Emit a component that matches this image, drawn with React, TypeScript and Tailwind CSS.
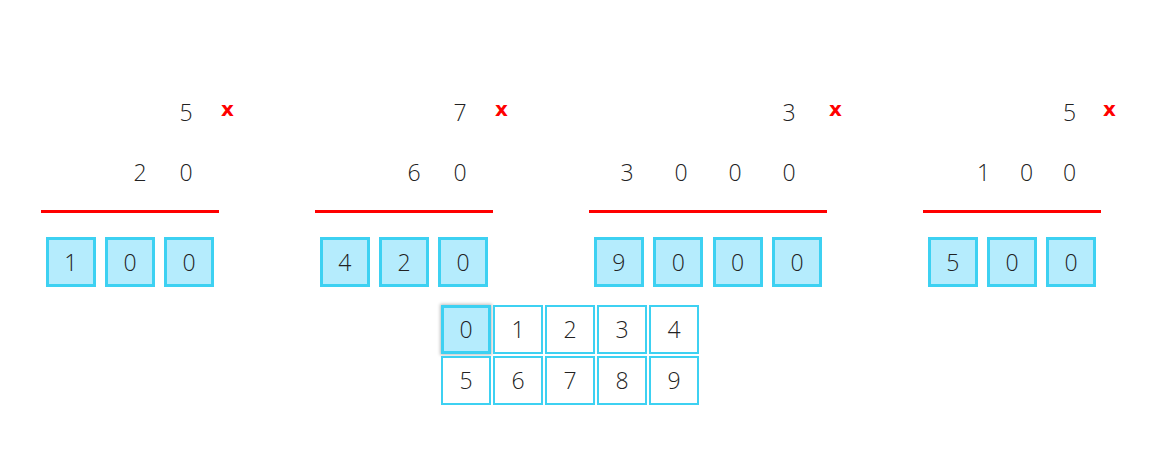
import React from "react";

type Panel = {
  width: number;
  top: string;
  bottom: string[];
  cell: number;
  pr: number;
  result: string[];
};

const panels: Panel[] = [
  { width: 178, top: "5", bottom: ["2", "0"], cell: 46, pr: 10, result: ["1", "0", "0"] },
  { width: 178, top: "7", bottom: ["6", "0"], cell: 46, pr: 10, result: ["4", "2", "0"] },
  { width: 238, top: "3", bottom: ["3", "0", "0", "0"], cell: 54, pr: 11, result: ["9", "0", "0", "0"] },
  { width: 178, top: "5", bottom: ["1", "0", "0"], cell: 43, pr: 10, result: ["5", "0", "0"] },
];

function PanelView({ p }: { p: Panel }) {
  return (
    <div className="flex flex-col" style={{ width: p.width }}>
      <div className="relative flex h-[60px] items-center justify-end" style={{ paddingRight: p.pr }}>
        <span className="text-center" style={{ width: p.cell }}>{p.top}</span>
        <span className="absolute left-full top-[17px] ml-[2px] text-[20px] font-bold leading-none text-[#ff0000] [font-family:'DejaVu_Sans',sans-serif]">
          x
        </span>
      </div>
      <div className="flex h-[60px] items-center justify-end" style={{ paddingRight: p.pr }}>
        {p.bottom.map((d, i) => (
          <span key={i} className="text-center" style={{ width: p.cell }}>
            {d}
          </span>
        ))}
      </div>
      <div className="mt-[8px] h-[3px] w-full bg-[#ff0000]" />
      <div className="mt-[24px] flex gap-[9.5px] px-[5px]">
        {p.result.map((d, i) => (
          <div
            key={i}
            className="flex h-[50px] w-[50px] items-center justify-center border-[3px] border-[#3dd1f2] bg-[#b5ecfd]"
          >
            {d}
          </div>
        ))}
      </div>
    </div>
  );
}

export default function App() {
  const keys = ["0", "1", "2", "3", "4", "5", "6", "7", "8", "9"];
  return (
    <div className="h-[469px] w-[1165px] bg-white text-[23px] font-[350] text-[#222] [font-family:'Open_Sans',sans-serif]">
      <div className="flex gap-[96px] pl-[41px] pt-[82px]">
        {panels.map((p, i) => (
          <PanelView key={i} p={p} />
        ))}
      </div>
      <div className="ml-[441px] mt-[18px] grid w-[258px] grid-cols-5 gap-x-[2px] gap-y-[2px]">
        {keys.map((k, i) => (
          <div
            key={k}
            className={
              i === 0
                ? "flex h-[49px] w-[50px] items-center justify-center border-[3px] border-[#3dd1f2] bg-[#b5ecfd] shadow-[0_0_3px_1px_rgba(0,0,0,0.25)]"
                : "flex h-[49px] w-[50px] items-center justify-center border-2 border-[#3dd1f2] bg-white"
            }
          >
            {k}
          </div>
        ))}
      </div>
    </div>
  );
}
